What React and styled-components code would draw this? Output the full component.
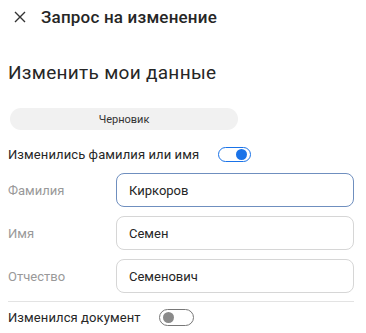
import React from 'react'
import styled, { createGlobalStyle } from 'styled-components'

const Global = createGlobalStyle`
  body {
    margin: 0;
    background: #fff;
    font-family: Roboto, "Noto Sans", sans-serif;
    color: #222;
  }
`

const Page = styled.div`
  width: 366px;
  padding: 0 12px 0 8px;
  box-sizing: border-box;
`

const Header = styled.div`
  height: 34px;
  display: flex;
  align-items: center;
  gap: 15px;
  padding-left: 6px;
`

const Title = styled.div`
  font-size: 17px;
  font-weight: 500;
  letter-spacing: 0.2px;
  color: #262626;
`

const Heading = styled.div`
  margin-top: 28px;
  font-size: 19px;
  letter-spacing: 0.3px;
  line-height: 22px;
  color: #262626;
`

const Chip = styled.div`
  margin-top: 24px;
  width: 228px;
  height: 22px;
  margin-left: 2px;
  border-radius: 11px;
  background: #f1f1f1;
  display: flex;
  align-items: center;
  justify-content: center;
  font-size: 11px;
  color: #333;
`

const SwitchRow = styled.div`
  display: flex;
  align-items: center;
  gap: ${p => p.$gap}px;
  height: 18px;
  margin-top: ${p => p.$top}px;
  font-size: 13px;
  letter-spacing: 0.1px;
  color: #262626;
`

const Track = styled.div`
  width: ${p => (p.$on ? 33 : 35)}px;
  height: ${p => (p.$on ? 15 : 17)}px;
  box-sizing: border-box;
  border-radius: 10px;
  border: 1.5px solid ${p => (p.$on ? '#1a73e8' : '#777')};
  display: flex;
  align-items: center;
  justify-content: ${p => (p.$on ? 'flex-end' : 'flex-start')};
  padding: 0 3px;
`

const Knob = styled.div`
  width: ${p => (p.$on ? 11 : 11)}px;
  height: ${p => (p.$on ? 11 : 11)}px;
  border-radius: 50%;
  background: ${p => (p.$on ? '#1a73e8' : '#8a8a8a')};
`

const Fields = styled.div`
  margin-top: 10px;
  display: flex;
  flex-direction: column;
  gap: 9px;
`

const Field = styled.div`
  display: grid;
  grid-template-columns: 108px 238px;
  align-items: center;
`

const Label = styled.div`
  font-size: 13px;
  color: #999;
`

const Input = styled.div`
  height: 34px;
  box-sizing: border-box;
  border-radius: 8px;
  border: 1px solid ${p => (p.$focus ? '#6f8fbf' : '#d6d6d6')};
  display: flex;
  align-items: center;
  padding-left: 12px;
  font-size: 13px;
  color: #262626;
`

const Divider = styled.div`
  margin-top: 8px;
  height: 1px;
  background: #e3e3e3;
`

const CloseIcon = () => (
  <svg width="12" height="12" viewBox="0 0 12 12">
    <path d="M1 1L11 11M11 1L1 11" stroke="#333" strokeWidth="1.4" />
  </svg>
)

const Switch = ({ on }) => (
  <Track $on={on}>
    <Knob $on={on} />
  </Track>
)

const rows = [
  { label: 'Фамилия', value: 'Киркоров', focus: true },
  { label: 'Имя', value: 'Семен' },
  { label: 'Отчество', value: 'Семенович' },
]

export default function App() {
  return (
    <Page>
      <Global />
      <Header>
        <CloseIcon />
        <Title>Запрос на изменение</Title>
      </Header>
      <Heading>Изменить мои данные</Heading>
      <Chip>Черновик</Chip>
      <SwitchRow $top={15} $gap={19}>
        Изменились фамилия или имя
        <Switch on />
      </SwitchRow>
      <Fields>
        {rows.map(r => (
          <Field key={r.label}>
            <Label>{r.label}</Label>
            <Input $focus={r.focus}>{r.value}</Input>
          </Field>
        ))}
      </Fields>
      <Divider />
      <SwitchRow $top={6} $gap={18}>
        Изменился документ
        <Switch />
      </SwitchRow>
    </Page>
  )
}
